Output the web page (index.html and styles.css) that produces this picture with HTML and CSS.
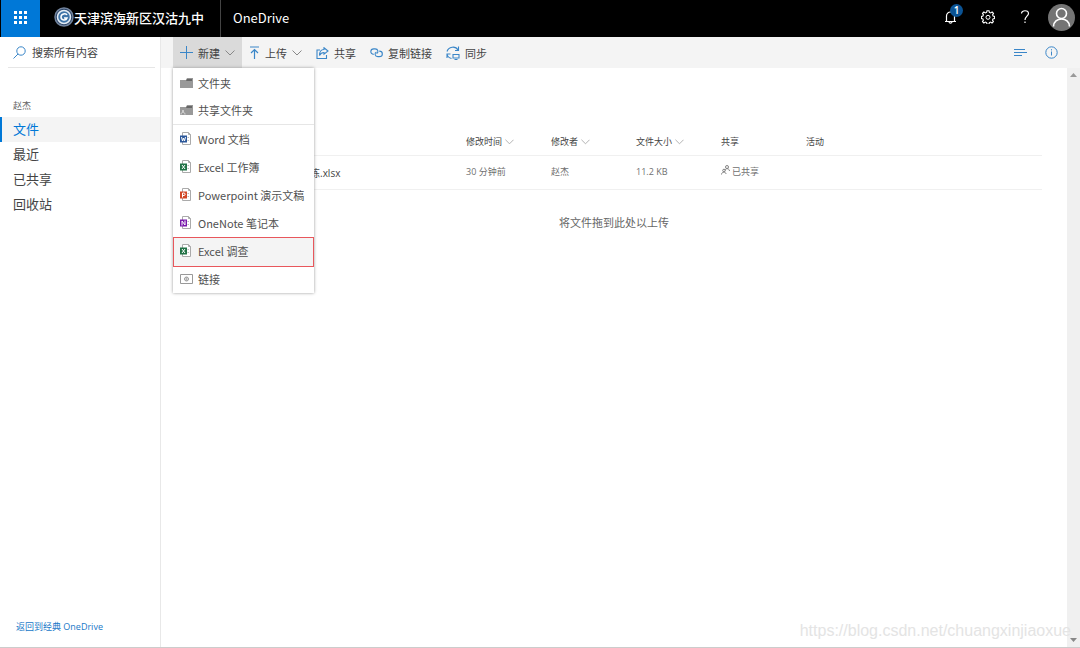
FILE: index.html
```html
<!DOCTYPE html>
<html lang="zh-CN">
<head>
<meta charset="utf-8">
<title>OneDrive</title>
<link rel="stylesheet" href="styles.css">
</head>
<body>
<svg class="defs" aria-hidden="true">
  <symbol id="chevron" viewBox="0 0 10 6"><path d="M.5.5 5 5 9.500.5" fill="none" stroke="currentColor"/></symbol>
  <symbol id="folder" viewBox="0 0 13 10"><path d="M0 2h6l1-2h6v10H0z" fill="#999"/><path d="M7 1h5v2H6z" fill="#666"/></symbol>
  <symbol id="doc" viewBox="0 0 12 13"><path d="M2.500.5h6l2 2v10h-8z" fill="#fff" stroke="#aaa"/><path d="M8.500.5v2h2" fill="none" stroke="#aaa"/><path d="M7.500 5.500H9M7.500 8.500H9" stroke="#bbb"/><path d="M0 3.500h7v7H0z" fill="currentColor"/></symbol>
</svg>
<div class="app">
  <header class="topbar">
    <button class="waffle" aria-label="应用启动器">
      <svg width="13" height="13" viewBox="0 0 13 13" fill="#fff"><path d="M0 0h3v3H0zM5 0h3v3H5zM10 0h3v3h-3zM0 5h3v3H0zM5 5h3v3H5zM10 5h3v3h-3zM0 10h3v3H0zM5 10h3v3H5zM10 10h3v3h-3z"/></svg>
    </button>
    <a class="brand" href="#">
      <svg width="20" height="20" viewBox="0 0 20 20" fill="none"><circle cx="10" cy="10" r="9" fill="#2b4468" stroke="#71839d" stroke-width="1.500"/><circle cx="10" cy="10" r="6.500" fill="#3f75a8" stroke="#e4edf5" stroke-width="1.500"/><path d="M13 8c-1-2-6-1.500-6 2s5 4 6 1h-3" stroke="#fff" stroke-width="1.500"/></svg>
      <span>天津滨海新区汉沽九中</span>
    </a>
    <a class="product" href="#">OneDrive</a>
    <div class="top-actions">
      <button class="icon-btn bell" aria-label="通知">
        <svg width="13" height="14" viewBox="0 0 13 14" fill="none" stroke="#fff" stroke-width="1.200"><path d="M1 11.500h11M2.500 11.500V6a4 4 0 0 1 8 0v5.500M5 12c.3 1.500 2.700 1.500 3 0"/></svg>
        <span class="badge">1</span>
      </button>
      <button class="icon-btn" aria-label="设置">
        <svg width="14" height="14" viewBox="0 0 14 14" fill="none" stroke="#fff"><path stroke-width="1.100" d="M6 .7h2l.4 1.700 1.200.5 1.500-.9 1.400 1.400-.9 1.500.5 1.100 1.500.5v2l-1.600.4-.5 1.200.9 1.500-1.400 1.400-1.500-.9-1.100.5-.4 1.600H6l-.4-1.600-1.200-.5-1.500.9-1.400-1.400.9-1.500-.5-1.200L.4 8.500v-2l1.500-.5.5-1.100-.9-1.500L2.900 2l1.500.9 1.200-.5z"/><circle cx="7" cy="7.300" r="2"/></svg>
      </button>
      <button class="icon-btn" aria-label="帮助">
        <svg width="10" height="14" viewBox="0 0 10 14" fill="none" stroke="#fff" stroke-width="1.200"><path d="M1.500 3.500C1.500-.2 8.500-.2 8.500 3.500 8.500 6 5 6.500 5 10M5 11.500v1.500"/></svg>
      </button>
      <button class="avatar" aria-label="账户">
        <svg width="27" height="27" viewBox="0 0 27 27" fill="none" stroke="#fff" stroke-width="1.600"><circle cx="13.500" cy="13.500" r="13.500" fill="#747474" stroke="none"/><circle cx="13.500" cy="9.500" r="5"/><path d="M5.500 22.500c0-10 16-10 16 0"/></svg>
      </button>
    </div>
  </header>

  <div class="body">
    <aside class="sidebar">
      <label class="search">
        <svg width="13" height="13" viewBox="0 0 13 13" fill="none" stroke="#3a86c8"><circle cx="8" cy="5" r="4.200"/><path d="M5 8 .5 12.500"/></svg>
        <input type="search" placeholder="搜索所有内容" aria-label="搜索所有内容">
      </label>
      <nav class="nav">
        <h2>赵杰</h2>
        <a class="active" href="#">文件</a>
        <a href="#">最近</a>
        <a href="#">已共享</a>
        <a href="#">回收站</a>
      </nav>
      <a class="classic" href="#">返回到经典 OneDrive</a>
    </aside>

    <main class="main">
      <div class="toolbar">
        <div class="new-wrap">
          <button class="cmd open"><svg width="13" height="13" viewBox="0 0 13 13" stroke="#3a86c8"><path d="M6.500 0v13M0 6.500h13"/></svg>新建<svg class="chev" width="10" height="6"><use href="#chevron"/></svg></button>
          <div class="menu">
            <button><svg width="13" height="10"><use href="#folder"/></svg>文件夹</button>
            <button class="last"><svg width="13" height="10" viewBox="0 0 13 10"><use href="#folder" width="13" height="10"/><path d="M1 9.500c0-3 4-3 4 0" fill="none" stroke="#ddd"/><circle cx="3" cy="6" r="1" fill="#ddd"/></svg>共享文件夹</button>
            <button><svg class="word" width="12" height="13" viewBox="0 0 12 13"><use href="#doc" width="12" height="13"/><path d="m1.500 5 1 4 1-3 1 3 1-4" fill="none" stroke="#fff"/></svg>Word 文档</button>
            <button><svg class="excel" width="12" height="13" viewBox="0 0 12 13"><use href="#doc" width="12" height="13"/><path d="m2 5 3 4M5 5 2 9" fill="none" stroke="#fff"/></svg>Excel 工作簿</button>
            <button><svg class="ppt" width="12" height="13" viewBox="0 0 12 13"><use href="#doc" width="12" height="13"/><path d="M2.500 9.500V5H4c1.500 0 1.500 2.500 0 2.500H2.500" fill="none" stroke="#fff"/></svg>Powerpoint 演示文稿</button>
            <button><svg class="note" width="12" height="13" viewBox="0 0 12 13"><use href="#doc" width="12" height="13"/><path d="M2 9.500V5l3 4V4.500" fill="none" stroke="#fff"/></svg>OneNote 笔记本</button>
            <button class="marked"><svg class="excel" width="12" height="13" viewBox="0 0 12 13"><use href="#doc" width="12" height="13"/><path d="m2 5 3 4M5 5 2 9" fill="none" stroke="#fff"/></svg>Excel 调查</button>
            <button><svg width="13" height="10" viewBox="0 0 13 10" fill="none" stroke="#999"><path d="M.5.5h12v9H.5z"/><circle cx="6.500" cy="5" r="2"/><path d="M4.500 5h4M6.500 3v4" stroke-width=".6"/></svg>链接</button>
          </div>
        </div>
        <button class="cmd"><svg width="11" height="13" viewBox="0 0 11 13" fill="none" stroke="#3a86c8" stroke-width="1.200"><path d="M1 1h9M5.500 13V4M2 7l3.500-3.500L9 7"/></svg>上传<svg class="chev" width="10" height="6"><use href="#chevron"/></svg></button>
        <button class="cmd"><svg width="13" height="12" viewBox="0 0 13 12" fill="none" stroke="#3a86c8" stroke-width="1.100"><path d="M4 3H1v8.500h9.500V8M8 .8l4 3.200-4 3.200V5.500C5.500 5.500 4.500 6.500 3.500 8.500 3.500 5 5 2.500 8 2.500z"/></svg>共享</button>
        <button class="cmd"><svg width="13" height="11" viewBox="0 0 14 12" fill="none" stroke="#3a86c8" stroke-width="1.200"><path d="M4 8C-.5 8 0 2 4 2h1.500c3.500 0 4 4 1.500 5"/><path d="M10 4.500c4.500 0 4.500 6 0 6H8.500C5 10.500 4.500 6.500 7 5.500"/></svg>复制链接</button>
        <button class="cmd"><svg width="14" height="14" viewBox="0 0 14 14" fill="none" stroke="#3a86c8" stroke-width="1.100"><path d="M1 5.500C2.500.5 9.500-.5 12 4M12.500.5V4.500H9M1 8c.5 2.500 2 4 4.500 4.500M1 12V8h3.500M7 8.500h6v3.500H7zM8.500 13.500h3"/></svg>同步</button>
        <div class="view-actions">
          <button class="icon-btn" aria-label="排序"><svg width="13" height="9" viewBox="0 0 13 9" stroke="#3a86c8"><path d="M0 1.500h11M0 4.500h13M0 7.500h8"/></svg></button>
          <button class="icon-btn" aria-label="信息"><svg width="13" height="13" viewBox="0 0 13 13" fill="none" stroke="#3a86c8"><circle cx="6.500" cy="6.500" r="5.700"/><path d="M6.500 5.500v4M6.500 3.200v1.200"/></svg></button>
        </div>
      </div>

      <div class="pane">
        <div class="content">
          <table class="files">
            <colgroup><col class="c-name"><col class="c"><col class="c"><col class="c"><col class="c"><col></colgroup>
            <thead>
              <tr><th></th><th>修改时间<svg width="9" height="6"><use href="#chevron"/></svg></th><th>修改者<svg width="9" height="6"><use href="#chevron"/></svg></th><th>文件大小<svg width="9" height="6"><use href="#chevron"/></svg></th><th>共享</th><th>活动</th></tr>
            </thead>
            <tbody>
              <tr><td class="name">练.xlsx</td><td>30 分钟前</td><td>赵杰</td><td>11.2 KB</td><td><svg class="people" width="9" height="10" viewBox="0 0 9 10" fill="none" stroke="#777" stroke-width=".9"><circle cx="6" cy="2" r="1.500"/><path d="M4 5.500c0-2.500 4.500-2.500 4.500.5"/><circle cx="3" cy="5.500" r="1.300"/><path d="M.5 9.500C.5 6.500 5 6.500 5 9"/></svg>已共享</td><td></td></tr>
            </tbody>
          </table>
          <p class="drop">将文件拖到此处以上传</p>
        </div>
        <div class="scroll" aria-hidden="true">
          <svg width="7" height="4" viewBox="0 0 7 4"><path d="M0 4 3.500 0 7 4z" fill="#999"/></svg>
          <svg width="7" height="4" viewBox="0 0 7 4"><path d="M0 0h7L3.500 4z" fill="#888"/></svg>
        </div>
      </div>
    </main>
  </div>
  <div class="watermark">https://blog.csdn.net/chuangxinjiaoxue</div>
</div>
</body>
</html>
```

FILE: styles.css
```css
* { box-sizing: border-box; }
body {
  margin: 0;
  font-family: "Open Sans", "Noto Sans CJK SC", sans-serif;
  font-size: 11px;
  color: #444;
  background: #fff;
}
button, input {
  font: inherit;
  color: inherit;
  background: none;
  border: 0;
  padding: 0;
  margin: 0;
}
a { color: inherit; text-decoration: none; }
svg { flex: none; }
.defs { position: absolute; width: 0; height: 0; }
.app {
  position: relative;
  display: flex;
  flex-direction: column;
  min-height: 100vh;
  border-bottom: 1px solid #ccc;
}

.topbar {
  display: flex;
  align-items: stretch;
  height: 37px;
  padding-left: 1px;
  background: #000;
  color: #fff;
}
.waffle {
  display: flex;
  align-items: center;
  justify-content: center;
  width: 39px;
  padding-bottom: 3px;
  background: #0078d7;
}
.brand {
  display: flex;
  align-items: center;
  padding: 0 16px 3px 14px;
  border-right: 1px solid #444;
  font-size: 13px;
  font-weight: 500;
}
.product {
  display: flex;
  align-items: center;
  padding: 0 12px 3px;
  font-family: "Noto Sans CJK SC", sans-serif;
  font-size: 13px;
}
.top-actions {
  display: flex;
  align-items: center;
  margin-left: auto;
  padding: 0 5px 3px 0;
}
.icon-btn {
  position: relative;
  display: flex;
  align-items: center;
  justify-content: center;
  width: 37px;
  height: 30px;
}
.badge {
  position: absolute;
  top: 2px;
  right: 6px;
  width: 13px;
  height: 13px;
  border-radius: 50%;
  background: #0b5394;
  font-size: 10px;
  font-weight: 600;
  line-height: 13px;
  text-align: center;
}
.avatar { display: flex; margin-left: 5px; }

.body { display: flex; flex: 1; }
.sidebar {
  display: flex;
  flex-direction: column;
  width: 161px;
  border-right: 1px solid #e8e8e8;
}
.search {
  display: flex;
  align-items: center;
  gap: 6px;
  height: 31px;
  margin: 0 5px 0 8px;
  padding: 0 5px;
  border-bottom: 1px solid #e6e6e6;
}
.search input { flex: 1; min-width: 0; outline: 0; }
.search input::placeholder { color: #444; opacity: 1; }
.nav { padding-top: 28px; }
.nav h2 {
  margin: 0;
  padding: 0 13px;
  font-size: 9px;
  font-weight: 400;
  line-height: 20px;
  color: #666;
}
.nav a {
  display: block;
  padding: 0 13px;
  font-size: 13px;
  line-height: 25px;
}
.nav h2 + a { margin-top: 1px; }
.nav .active {
  padding-left: 11px;
  border-left: 2px solid #0078d7;
  background: #f4f4f4;
  color: #0078d7;
}
.classic {
  margin-top: auto;
  padding: 0 16px 12px;
  font-size: 9px;
  line-height: 16px;
  color: #1878c8;
}

.main { display: flex; flex: 1; flex-direction: column; min-width: 0; }
.toolbar {
  display: flex;
  align-items: stretch;
  height: 31px;
  padding: 0 13px 0 12px;
  background: #f4f4f4;
}
.new-wrap { position: relative; display: flex; }
.cmd {
  display: flex;
  align-items: center;
  gap: 5px;
  padding: 0 7px;
  white-space: nowrap;
}
.cmd.open { background: #dadada; }
.chev { color: #888; }
.view-actions { display: flex; align-items: center; margin-left: auto; }
.view-actions .icon-btn { width: 31px; }
.menu {
  position: absolute;
  top: 100%;
  left: 0;
  z-index: 2;
  width: 141px;
  padding-top: 1px;
  background: #fff;
  box-shadow: 0 0 3px #999;
  font-family: "Noto Sans CJK SC", sans-serif;
}
.menu button {
  display: grid;
  grid-template-columns: 13px 1fr;
  align-items: center;
  gap: 5px;
  width: 100%;
  height: 28px;
  padding: 0 7px 1px;
  text-align: left;
  white-space: nowrap;
  color: #505050;
}
.menu .last { border-bottom: 1px solid #e6e6e6; }
.menu .marked {
  position: relative;
  height: 30px;
  margin-bottom: -2px;
  padding-bottom: 3px;
  background: #f4f4f4;
  outline: 1px solid #e8575c;
  outline-offset: -1px;
}
.word { color: #2b579a; }
.excel { color: #217346; }
.ppt { color: #d24726; }
.note { color: #7719aa; }

.pane { display: flex; flex: 1; }
.content { flex: 1; padding: 60px 25px 0 12px; }
.files {
  width: 100%;
  table-layout: fixed;
  border-collapse: collapse;
  font-size: 9px;
}
.c-name { width: 293px; }
.c { width: 85px; }
.files th, .files td {
  padding: 0;
  text-align: left;
  font-weight: 400;
  border-bottom: 1px solid #f0f0f0;
  white-space: nowrap;
}
.files th { height: 27px; }
.files td { height: 34px; padding-bottom: 2px; color: #707070; }
.files th svg { margin-left: 3px; color: #aaa; }
.files .name {
  padding: 0 0 0 137px;
  font-size: 10px;
  color: #444;
}
.people { margin-right: 2px; }
.drop {
  margin: 24px 0 0;
  padding-left: 13px;
  line-height: 18px;
  text-align: center;
  color: #666;
}
.scroll {
  display: flex;
  flex-direction: column;
  align-items: center;
  justify-content: space-between;
  width: 13px;
  padding: 5px 0;
  background: #f0f0f0;
}
.watermark {
  position: absolute;
  right: 9px;
  bottom: 7px;
  font-family: "Liberation Sans", Arial, sans-serif;
  font-size: 16px;
  line-height: 18px;
  color: #e4e4e4;
}
```
